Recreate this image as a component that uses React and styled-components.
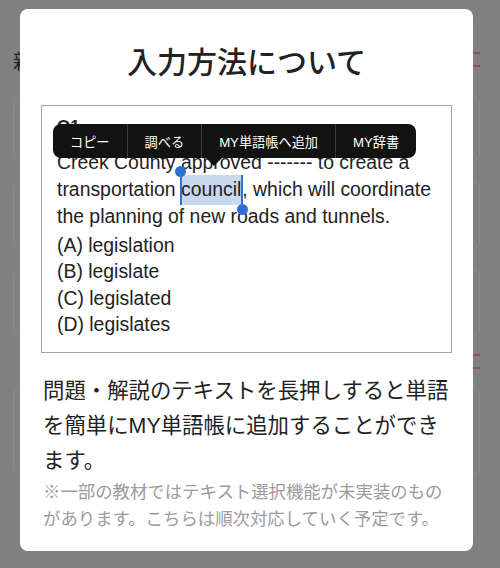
import React from 'react'
import styled, { createGlobalStyle } from 'styled-components'

const GlobalStyle = createGlobalStyle`
  html, body {
    margin: 0;
    padding: 0;
    background: #808080;
  }
  * { box-sizing: border-box; }
`

const jp = `"Liberation Sans", "Noto Sans CJK JP", sans-serif`

const Screen = styled.div`
  position: relative;
  width: 500px;
  height: 568px;
  overflow: hidden;
  background: #808080;
  font-family: ${jp};
`

// dimmed page behind the dialog
const Backdrop = styled.div`
  display: flex;
  flex-direction: column;
  padding: 40px 20px 0 13px;
`

const SectionHead = styled.div`
  display: flex;
  align-items: center;
  justify-content: space-between;
  height: ${p => p.$h}px;
  font-size: 20px;
  color: #1e1e1e;
`

const BgCard = styled.div`
  height: ${p => p.$h}px;
  margin-bottom: ${p => p.$gap}px;
  border: 1px solid #8b8b8b;
  border-radius: 10px;
  background: #818181;
`

const Modal = styled.div`
  position: absolute;
  left: 20px;
  top: 9px;
  width: 453px;
  height: 542px;
  background: #fff;
  border-radius: 8px;
  padding-top: 34px;
  display: flex;
  flex-direction: column;
`

const Title = styled.h1`
  margin: 0;
  text-align: center;
  font-size: 30px;
  line-height: 40px;
  font-weight: 500;
  color: #222;
`

const Sample = styled.div`
  position: relative;
  margin: 22px 21px 0;
  height: 248px;
  border: 1px solid #a3a3a3;
  padding: 10px 15px 0;
  font-family: "Liberation Sans", Arial, sans-serif;
  font-size: 19.4px;
  color: #222;
`

const Label = styled.div`
  font-weight: 700;
  font-size: 17px;
  line-height: 22px;
  height: 32.5px;
`

const Sentence = styled.div`
  line-height: 27px;
`

const Options = styled.div`
  margin-top: 2px;
  line-height: 26.5px;
`

const Picked = styled.span`
  position: relative;
  background: #c8d8ed;
  padding: 3px 1px 5px 0;
`

const Handle = styled.span`
  position: absolute;
  width: 2px;
  background: #2f6fd6;
  ${p => p.$end
    ? 'right: -1px; top: 0; height: 35px;'
    : 'left: -1px; top: -3px; height: 33px;'}

  &::after {
    content: '';
    position: absolute;
    left: -4.5px;
    width: 11px;
    height: 11px;
    border-radius: 50%;
    background: #2f6fd6;
    ${p => (p.$end ? 'bottom: -5.5px;' : 'top: -5.5px;')}
  }
`

const EditMenu = styled.div`
  position: absolute;
  left: 11px;
  top: 18px;
  height: 34px;
  display: flex;
  background: #121212;
  border-radius: 8px;
  font-family: ${jp};
  font-size: 13.2px;
  color: #fff;

  &::after {
    content: '';
    position: absolute;
    left: 153px;
    top: 34px;
    border-left: 8px solid transparent;
    border-right: 8px solid transparent;
    border-top: 8px solid #121212;
  }
`

const MenuItem = styled.div`
  display: flex;
  align-items: center;
  padding: 0 17px;
  & + & {
    border-left: 1px solid #3c3c3c;
  }
`

const Body = styled.div`
  margin-top: 20.5px;
  padding: 0 20px 0 23px;
  font-size: 21.4px;
  line-height: 35px;
  color: #222;
  white-space: nowrap;
`

const Note = styled.div`
  padding: 0 20px 0 23px;
  font-size: 17.4px;
  line-height: 27px;
  color: #9b9b9b;
  white-space: nowrap;
`

const RedMark = () => (
  <svg width="8" height="18" viewBox="0 0 8 18">
    <path d="M1 2h7M0 15h8" stroke="#a33a4a" strokeWidth="1.4" />
  </svg>
)

const menu = ['コピー', '調べる', 'MY単語帳へ追加', 'MY辞書']
const options = ['(A) legislation', '(B) legislate', '(C) legislated', '(D) legislates']

export default function App() {
  return (
    <Screen>
      <GlobalStyle />
      <Backdrop>
        <SectionHead $h={40}>
          <span>新着</span>
          <RedMark />
        </SectionHead>
        <div style={{ height: 15 }} />
        <BgCard $h={68} $gap={16} />
        <BgCard $h={72} $gap={16} />
        <BgCard $h={71} $gap={0} />
        <SectionHead $h={47}>
          <span />
          <RedMark />
        </SectionHead>
        <BgCard $h={92} $gap={0} />
      </Backdrop>

      <Modal>
        <Title>入力方法について</Title>
        <Sample>
          <Label>Q1.</Label>
          <Sentence>
            Creek County approved ------- to create a<br />
            transportation{' '}
            <Picked>
              <Handle />
              council
              <Handle $end />
            </Picked>
            , which will coordinate<br />
            the planning of new roads and tunnels.
          </Sentence>
          <Options>
            {options.map(o => <div key={o}>{o}</div>)}
          </Options>
          <EditMenu>
            {menu.map(m => <MenuItem key={m}>{m}</MenuItem>)}
          </EditMenu>
        </Sample>
        <Body>
          問題・解説のテキストを長押しすると単語<br />
          を簡単にMY単語帳に追加することができ<br />
          ます。
        </Body>
        <Note>
          ※一部の教材ではテキスト選択機能が未実装のもの<br />
          があります。こちらは順次対応していく予定です。
        </Note>
      </Modal>
    </Screen>
  )
}
